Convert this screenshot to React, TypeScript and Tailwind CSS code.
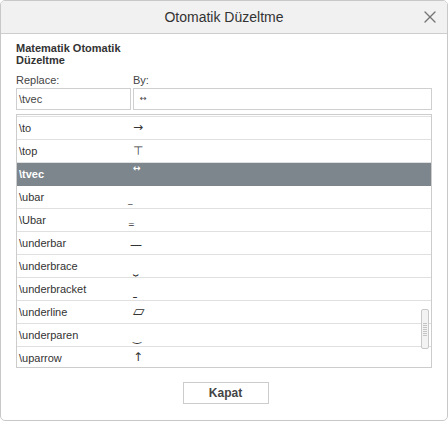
import { X } from "lucide-react";

type Row = { key: string; sym: string; symCls: string };

const rows: Row[] = [
    { key: "\\to", sym: "→", symCls: "text-[12px] -translate-y-[1px]" },
    { key: "\\top", sym: "⊤", symCls: "text-[12px]" },
    { key: "\\tvec", sym: "↔", symCls: "text-[9px] -translate-y-[6px]" },
    { key: "\\ubar", sym: "_", symCls: "text-[9px] -translate-x-[5px] translate-y-[3px]" },
    { key: "\\Ubar", sym: "=", symCls: "text-[8px] -translate-x-[5px] translate-y-[5px]" },
    { key: "\\underbar", sym: "—", symCls: "text-[12px] -translate-x-[3px] translate-y-[2px]" },
    { key: "\\underbrace", sym: "⏟", symCls: "text-[9px] translate-y-[4px]" },
    { key: "\\underbracket", sym: "⎵", symCls: "text-[10px] translate-y-[5px]" },
    { key: "\\underline", sym: "▱", symCls: "text-[15px] -translate-y-[1px]" },
    { key: "\\underparen", sym: "‿", symCls: "text-[10px] translate-y-[3px]" },
    { key: "\\uparrow", sym: "↑", symCls: "text-[12px] -translate-y-[1px]" },
];

export default function App() {
    return (
        <div className="w-[448px] h-[421px] bg-white border border-[#c8c8c8] rounded-[5px] overflow-hidden font-['Liberation_Sans',Arial,sans-serif] text-[#333]">
            <div className="relative h-[33px] bg-[#f1f1f1] border-b border-[#cdcdcd] flex items-center justify-center">
                <span className="text-[14px] text-[#333]">Otomatik Düzeltme</span>
                <X className="absolute right-[7px] top-[6px] w-[20px] h-[20px] text-[#757575]" strokeWidth={1.6} />
            </div>

            <div className="px-[15px] pt-[8px]">
                <div className="w-[125px] text-[11px] leading-[12px] font-bold text-[#333]">Matematik Otomatik Düzeltme</div>

                <div className="mt-[8px] grid grid-cols-[115px_1fr] gap-x-[2px] text-[11px] text-[#444]">
                    <div className="leading-[12px]">Replace:</div>
                    <div className="leading-[12px]">By:</div>
                    <div className="mt-[2px] h-[22px] border border-[#cfcfcf] flex items-center pl-[2px]">\tvec</div>
                    <div className="mt-[2px] h-[22px] border border-[#cfcfcf] flex items-center pl-[6px] font-['DejaVu_Sans'] text-[8px]">↔</div>
                </div>

                <div className="relative mt-[4px] h-[254px] border border-[#cccccc] overflow-hidden">
                    <div className="-mt-[21px]">
                        <div className="h-[23px] border-b border-[#e0e0e0]" />
                        {rows.map((r) => {
                            const sel = r.key === "\\tvec";
                            return (
                                <div
                                    key={r.key}
                                    className={`h-[23px] border-b flex items-center text-[11px] ${sel ? "bg-[#7e868d] border-[#7e868d] text-white font-bold" : "border-[#e0e0e0] text-[#333]"}`}
                                >
                                    <div className="w-[116px] pl-[2px]">{r.key}</div>
                                    <div className={`font-['DejaVu_Sans'] leading-none ${sel ? "text-white" : "text-[#333]"} ${r.symCls}`}>{r.sym}</div>
                                </div>
                            );
                        })}
                    </div>
                    <div className="absolute right-[2px] top-[194px] w-[8px] h-[40px] rounded-[2px] border border-[#c8c8c8] bg-[#f3f3f3] flex flex-col items-center justify-center gap-[1px]">
                        {[0, 1, 2, 3, 4, 5, 6].map((i) => (
                            <div key={i} className="w-[4px] h-[1px] bg-[#c4c4c4]" />
                        ))}
                    </div>
                </div>

                <div className="mt-[14px] flex justify-center pl-[3px]">
                    <div className="w-[86px] h-[22px] border border-[#cccccc] flex items-center justify-center text-[12px] font-bold text-[#444]">Kapat</div>
                </div>
            </div>
        </div>
    );
}
